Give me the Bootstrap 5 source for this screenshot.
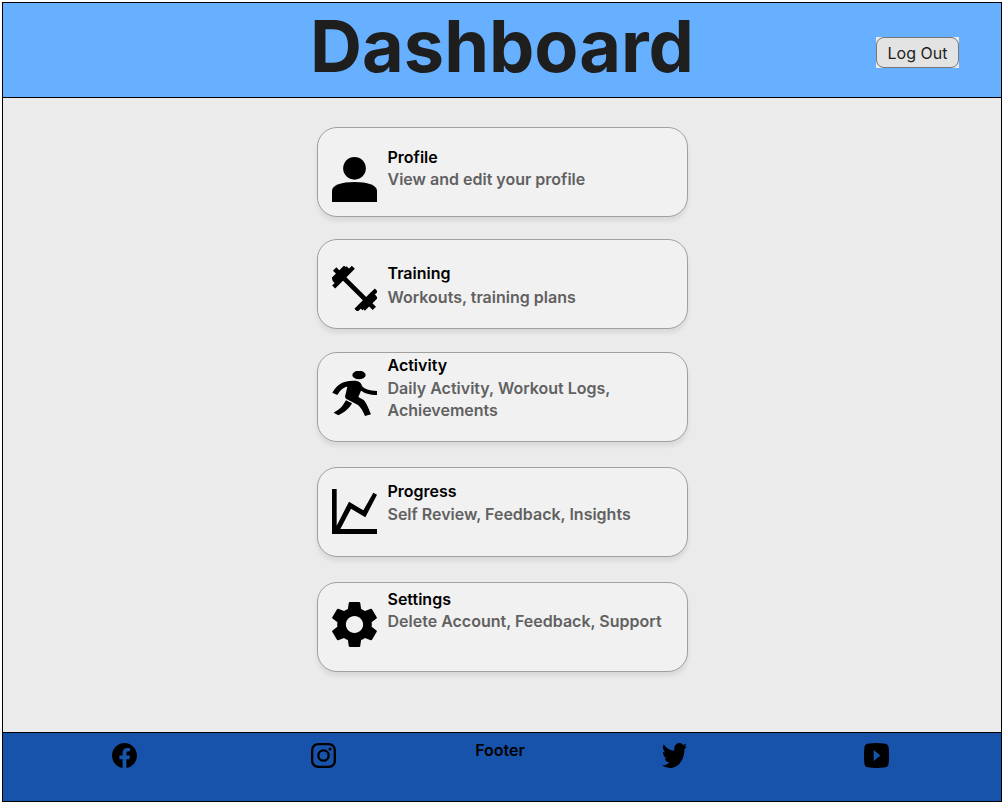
<!DOCTYPE html>
<html lang="en">
<head>
<meta charset="utf-8">
<meta name="viewport" content="width=device-width, initial-scale=1">
<title>Dashboard</title>
<link rel="stylesheet" href="https://cdn.jsdelivr.net/npm/bootstrap@5.3.0/dist/css/bootstrap.min.css">
<style>
  body { font-family: Inter, "Liberation Sans", sans-serif; font-size: 16px; line-height: 22px; padding: 2px; background: #fff; color: #000; }
  .app-frame { border: 1px solid #000; background: #ebebeb; }
  .app-header { background: #66b0ff; border-bottom: 1px solid #000; height: 95px; display: grid; grid-template-columns: 1fr auto 1fr; }
  .app-title { grid-column: 2; font-size: 72px; font-weight: 700; line-height: 86px; color: #1e1e1e; }
  .logout-wrap { background: #ebebeb; margin-top: 5px; margin-right: 42px; }
  .btn-logout { display: block; width: 83px; height: 31px; padding: 0; line-height: 30px; color: #1e1e1e; background: #e3e3e3; border: 1px solid #767676; border-radius: 8px; }
  .btn-logout:hover { background: #d5d5d5; border-color: #767676; }
  .menu-list { width: 371px; max-width: 100%; padding-top: 29px; }
  .menu-card { min-height: 90px; background: #f1f1f1; border: 1px solid #a0a0a0; border-radius: 20px; box-shadow: 0 4px 4px rgba(0,0,0,.08); padding: 0 14px; gap: 11px; color: #000; font-weight: 600; }
  .menu-card:hover { color: #000; background: #f6f6f6; }
  .menu-card svg { width: 45px; height: 45px; flex: none; }
  .menu-card small { font-size: 16px; color: #616161; }
  .space-near { margin-bottom: 22px; }
  .space-mid { margin-bottom: 23px; }
  .space-far { margin-bottom: 25px; }
  .card-profile svg { margin-top: 29px; } .card-profile span { padding-top: 18px; }
  .card-training svg { margin-top: 26px; } .card-training span { padding-top: 22px; }
  .card-training small { margin-top: 2px; }
  .card-activity svg { margin-top: 18px; } .card-activity span { padding-top: 1px; }
  .card-progress svg { margin-top: 21px; } .card-progress span { padding-top: 12px; }
  .card-settings svg { margin-top: 19px; } .card-settings span { padding-top: 5px; }
  .card-activity small, .card-progress small { margin-top: 1px; }
  .app-footer { min-height: 69px; background: #1753aa; border-top: 1px solid #000; display: grid; grid-template-columns: 242fr 157fr 196fr 153fr 250fr; justify-items: center; align-items: start; font-weight: 600; padding-top: 10px; }
  .app-footer a { color: #000; }
  .app-footer svg { display: block; width: 25px; height: 25px; }
  .footer-label { margin-top: -4px; }
</style>
</head>
<body class="min-vh-100 d-flex flex-column">
<div class="app-frame flex-grow-1 d-flex flex-column">
  <header class="app-header">
    <h1 class="app-title mb-0">Dashboard</h1>
    <div class="d-flex justify-content-end align-items-center">
      <div class="logout-wrap"><button type="button" class="btn btn-logout">Log Out</button></div>
    </div>
  </header>

  <main class="flex-grow-1">
    <nav class="menu-list mx-auto d-flex flex-column" aria-label="Dashboard sections">
      <a href="#profile" class="menu-card card-profile space-near d-flex text-decoration-none">
        <svg viewBox="66 111 135 135" aria-hidden="true"><circle cx="133.500" cy="145" r="34"/><path d="M66 246V212C66 196 96 186 133.500 186S201 196 201 212V246Z"/></svg>
        <span class="d-flex flex-column">Profile<small>View and edit your profile</small></span>
      </a>
      <a href="#training" class="menu-card card-training space-mid d-flex text-decoration-none">
        <svg viewBox="66 93 135 135" aria-hidden="true"><g fill="none" stroke="#000" stroke-width="13"><path stroke-width="14" d="M74 102 193 220"/><path d="M71 156 130 97M68 135 107 96M199 165 138 226M199 184 160 223"/><path stroke-width="20" d="M74 144 117 101M192 177 150 219"/></g></svg>
        <span class="d-flex flex-column">Training<small>Workouts, training plans</small></span>
      </a>
      <a href="#activity" class="menu-card card-activity space-far d-flex text-decoration-none">
        <svg viewBox="66 78 135 135" aria-hidden="true"><ellipse cx="147" cy="90" rx="20" ry="13"/><path d="M67 143C80 122 92 107 131 107C151 107 153 115 157 124C162 132 178 137 201 138V150C178 150 164 144 153 137L145 156L161 165C168 172 175 188 183 208L165 213C160 201 153 187 144 180L108 161C104 156 105 152 107 147L112 125C99 127 90 136 82 150Z"/><path d="M108 166 126 175C117 191 105 201 85 211L71 203C91 193 97 184 108 166Z"/></svg>
        <span class="d-flex flex-column">Activity<small>Daily Activity, Workout Logs, Achievements</small></span>
      </a>
      <a href="#progress" class="menu-card card-progress space-far d-flex text-decoration-none">
        <svg viewBox="66 87 135 135" aria-hidden="true"><path d="M66 87H80V197L117 125L160 151L190 98L201 104L166 172L123 146L91 207H201V222H66Z"/></svg>
        <span class="d-flex flex-column">Progress<small>Self Review, Feedback, Insights</small></span>
      </a>
      <a href="#settings" class="menu-card card-settings space-far d-flex text-decoration-none">
        <svg viewBox="2.620 2.400 18.760 19.200" preserveAspectRatio="none" aria-hidden="true"><path d="M19.14 12.94c.04-.3.06-.61.06-.94 0-.32-.02-.64-.07-.94l2.03-1.58c.18-.14.23-.41.12-.61l-1.920-3.320c-.12-.22-.37-.29-.59-.22l-2.390.96c-.5-.38-1.030-.7-1.620-.94l-.36-2.540c-.04-.24-.24-.41-.48-.41h-3.840c-.24 0-.43.17-.47.41l-.36 2.540c-.59.24-1.130.57-1.620.94l-2.390-.96c-.22-.08-.47 0-.59.22L2.740 8.870c-.12.21-.08.47.12.61l2.030 1.580c-.05.3-.09.63-.09.94s.02.64.07.94l-2.030 1.580c-.18.14-.23.41-.12.61l1.920 3.320c.12.22.37.29.59.22l2.390-.96c.5.38 1.030.7 1.620.94l.36 2.540c.05.24.24.41.48.41h3.840c.24 0 .44-.17.47-.41l.36-2.540c.59-.24 1.130-.56 1.620-.94l2.390.96c.22.08.47 0 .59-.22l1.920-3.320c.12-.22.07-.47-.12-.61l-2.010-1.580zM12 15.600c-1.980 0-3.600-1.620-3.600-3.600s1.620-3.600 3.600-3.600 3.600 1.620 3.600 3.600-1.620 3.600-3.600 3.600z"/></svg>
        <span class="d-flex flex-column">Settings<small>Delete Account, Feedback, Support</small></span>
      </a>
    </nav>
  </main>

  <footer class="app-footer">
    <a href="#facebook" aria-label="Facebook"><svg viewBox="2 2 20 20"><path d="M12 2.040C6.500 2.040 2 6.530 2 12.060C2 17.060 5.660 21.210 10.440 21.960V14.960H7.900V12.060H10.440V9.850C10.440 7.340 11.930 5.960 14.220 5.960C15.310 5.960 16.450 6.150 16.450 6.150V8.620H15.190C13.950 8.620 13.560 9.390 13.560 10.180V12.060H16.340L15.890 14.960H13.560V21.960A10 10 0 0 0 22 12.060C22 6.530 17.500 2.040 12 2.040Z"/></svg></a>
    <a href="#instagram" aria-label="Instagram"><svg viewBox="0 0 75 75"><rect x="3.500" y="3.500" width="68" height="68" rx="18" fill="none" stroke="#000" stroke-width="7"/><circle cx="37.500" cy="37.500" r="15.500" fill="none" stroke="#000" stroke-width="7"/><circle cx="57" cy="18" r="4.500"/></svg></a>
    <span class="footer-label">Footer</span>
    <a href="#twitter" aria-label="Twitter"><svg viewBox="0 2 16 13" preserveAspectRatio="none"><path d="M5.026 15c6.038 0 9.341-5.003 9.341-9.334 0-.14 0-.282-.006-.422A6.685 6.685 0 0 0 16 3.542a6.658 6.658 0 0 1-1.889.518 3.301 3.301 0 0 0 1.447-1.817 6.533 6.533 0 0 1-2.087.793A3.286 3.286 0 0 0 7.875 6.030a9.325 9.325 0 0 1-6.767-3.429 3.289 3.289 0 0 0 1.018 4.382A3.323 3.323 0 0 1 .64 6.575v.045a3.288 3.288 0 0 0 2.632 3.218 3.203 3.203 0 0 1-.865.115 3.230 3.230 0 0 1-.614-.057 3.283 3.283 0 0 0 3.067 2.277A6.588 6.588 0 0 1 .78 13.580a6.320 6.320 0 0 1-.78-.045A9.344 9.344 0 0 0 5.026 15z"/></svg></a>
    <a href="#youtube" aria-label="YouTube"><svg viewBox="0 0 75 75"><path fill-rule="evenodd" d="M11 2Q37 -2 64 2Q73 3 74 14Q76 37 74 61Q73 72 64 73Q37 77 11 73Q2 72 1 61Q-1 37 1 14Q2 3 11 2ZM29 21V54L49 37.500Z"/></svg></a>
  </footer>
</div>
<script src="https://cdn.jsdelivr.net/npm/bootstrap@5.3.0/dist/js/bootstrap.bundle.min.js"></script>
</body>
</html>
